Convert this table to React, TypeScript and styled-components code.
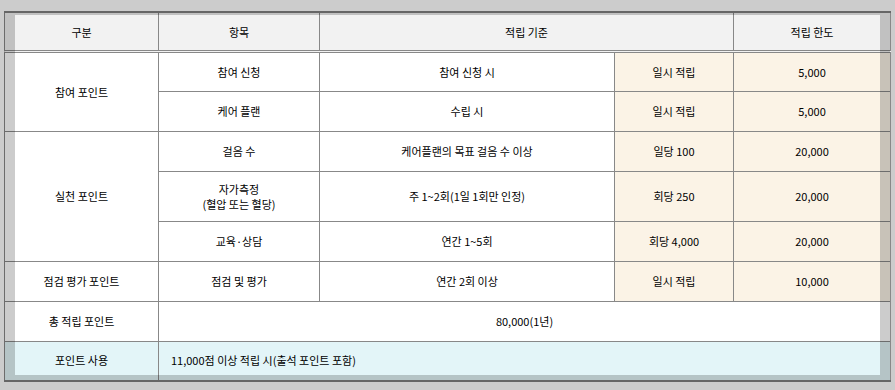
import styled, { createGlobalStyle } from "styled-components";

const GlobalStyle = createGlobalStyle`
  html, body {
    margin: 0;
    padding: 0;
    background: #cccccc;
  }
  body {
    font-family: "Noto Sans CJK KR", "Noto Sans", sans-serif;
  }
`;

type Tone = "plain" | "cream" | "blue";

const toneColor: Record<Tone, string> = {
  plain: "#ffffff",
  cream: "#fbf3e6",
  blue: "#e3f5f8",
};

const rows = [
  { group: "참여 포인트", span: 2, item: "참여 신청", rule: "참여 신청 시", rate: "일시 적립", limit: "5,000", h: 40 },
  { item: "케어 플랜", rule: "수립 시", rate: "일시 적립", limit: "5,000", h: 40 },
  { group: "실천 포인트", span: 3, item: "걸음 수", rule: "케어플랜의 목표 걸음 수 이상", rate: "일당 100", limit: "20,000", h: 40 },
  { item: "자가측정\n(혈압 또는 혈당)", rule: "주 1~2회(1일 1회만 인정)", rate: "회당 250", limit: "20,000", h: 50 },
  { item: "교육·상담", rule: "연간 1~5회", rate: "회당 4,000", limit: "20,000", h: 40 },
  { group: "점검 평가 포인트", span: 1, item: "점검 및 평가", rule: "연간 2회 이상", rate: "일시 적립", limit: "10,000", h: 40 },
];

export default function App() {
  return (
    <Page>
      <GlobalStyle />
      <Frame>
        <Table>
          <colgroup>
            <col style={{ width: 154 }} />
            <col style={{ width: 161 }} />
            <col style={{ width: 295 }} />
            <col style={{ width: 119 }} />
            <col style={{ width: 157 }} />
          </colgroup>
          <thead>
            <tr>
              <Th>구분</Th>
              <Th>항목</Th>
              <Th colSpan={2}>적립 기준</Th>
              <Th>적립 한도</Th>
            </tr>
          </thead>
          <tbody>
            {rows.map((r, i) => (
              <Row key={i} $h={r.h}>
                {r.group && <Cell rowSpan={r.span}>{r.group}</Cell>}
                <Cell>{r.item}</Cell>
                <Cell>{r.rule}</Cell>
                <Cell $tone="cream">{r.rate}</Cell>
                <Cell $tone="cream">{r.limit}</Cell>
              </Row>
            ))}
            <Row $h={40}>
              <Cell>총 적립 포인트</Cell>
              <Cell colSpan={4}>80,000(1년)</Cell>
            </Row>
            <Row $h={39}>
              <Cell $tone="blue">포인트 사용</Cell>
              <Cell $tone="blue" $left colSpan={4}>
                11,000점 이상 적립 시(출석 포인트 포함)
              </Cell>
            </Row>
          </tbody>
        </Table>
      </Frame>
    </Page>
  );
}

const Page = styled.div`
  padding: 11px 5px 8px 4px;
`;

const Frame = styled.div`
  position: relative;
  width: 886px;

  &::after {
    content: "";
    position: absolute;
    top: 2px;
    bottom: 2px;
    left: 0;
    right: 0;
    border-style: solid;
    border-color: rgba(0, 0, 0, 0.2);
    border-width: 2px 10px 5px 11px;
    pointer-events: none;
  }
`;

const Table = styled.table`
  width: 886px;
  table-layout: fixed;
  border-collapse: collapse;
  border-top: 2px solid #666666;
  border-bottom: 2px solid #666666;
  font-size: 11px;
  color: #000000;
`;

const Th = styled.th`
  height: 37px;
  padding: 0;
  background: #f2f2f2;
  font-weight: normal;
  text-align: center;
  border-left: 1px solid #888888;
  border-right: 1px solid #888888;
  border-bottom: 3px double #888888;
`;

const Row = styled.tr<{ $h: number }>`
  height: ${(p) => p.$h}px;
`;

const Cell = styled.td<{ $tone?: Tone; $left?: boolean }>`
  padding: 0 ${(p) => (p.$left ? "12px" : "4px")};
  background: ${(p) => toneColor[p.$tone ?? "plain"]};
  text-align: ${(p) => (p.$left ? "left" : "center")};
  vertical-align: middle;
  white-space: pre-line;
  line-height: 15px;
  border: 1px solid #888888;
`;
